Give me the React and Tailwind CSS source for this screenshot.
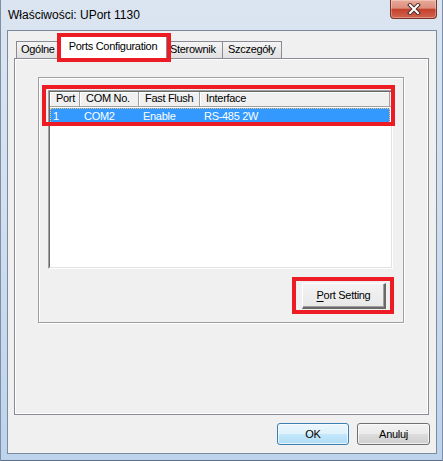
export default function App() {
  const tabText = "text-[11px] tracking-[-0.3px] leading-[13px]";
  return (
    <div className="w-[443px] h-[461px] flex flex-col relative overflow-hidden bg-[linear-gradient(to_bottom,#dbe5f1_0%,#d3e0ef_40%,#bdd3ec_100%)] shadow-[inset_1px_0_0_#7d8fa6,inset_-1px_0_0_#7d8fa6,inset_0_-1px_0_#5d6f86] font-['Liberation_Sans',Arial,sans-serif] text-black">
      {/* Title bar */}
      <div className="h-[30px] flex items-start justify-between shrink-0">
        <div className="pl-[8px] pt-[8px] text-[12px] leading-[14px] text-black">Właściwości: UPort 1130</div>
        <div className="mr-[6px] w-[47px] h-[19px] rounded-b-[4px] border border-t-0 border-[#7a3328] bg-[linear-gradient(to_bottom,#eaa898_0%,#dc8f7d_45%,#c5412d_52%,#d1644d_100%)] shadow-[inset_0_0_0_1px_rgba(255,255,255,0.3)] flex items-center justify-center">
          <svg width="14" height="12" viewBox="0 0 14 12">
            <path d="M3 2 L11 10 M11 2 L3 10" stroke="#4a2c28" strokeWidth="4" strokeLinecap="square" />
            <path d="M3 2 L11 10 M11 2 L3 10" stroke="#ffffff" strokeWidth="2" strokeLinecap="square" />
          </svg>
        </div>
      </div>

      {/* Client area */}
      <div className="flex-1 ml-[7px] mr-[6px] mb-[7px] border border-[#7a8ba0] bg-[#f0f0f0] flex flex-col">
        {/* Tabs */}
        <div className="h-[27px] shrink-0 flex items-end pl-[8px]">
          <div className={`h-[17px] w-[43px] border-l border-t border-[#898c95] bg-gradient-to-b from-[#f4f4f4] to-[#e1e1e1] pl-[4px] pt-[1px] ${tabText}`}>Ogólne</div>
          <div className={`relative z-10 -mb-px h-[23px] w-[108px] border-l border-t border-r border-[#898c95] bg-white text-center pt-[3px] ${tabText}`}>Ports Configuration</div>
          <div className={`h-[17px] w-[56px] border-t border-r border-[#898c95] bg-gradient-to-b from-[#f4f4f4] to-[#e1e1e1] pl-[3px] pt-[1px] ${tabText}`}>Sterownik</div>
          <div className={`h-[17px] w-[59px] border-t border-r border-[#898c95] bg-gradient-to-b from-[#f4f4f4] to-[#e1e1e1] pl-[5px] pt-[1px] ${tabText}`}>Szczegóły</div>
        </div>

        {/* Tab panel */}
        <div className="ml-[6px] w-[415px] h-[357px] shrink-0 border border-[#898c95] bg-[#f0f0f0] shadow-[inset_0_0_0_1px_#ffffff]">
          {/* Group box */}
          <div className="ml-[23px] mt-[18px] w-[366px] h-[246px] border border-[#a0a0a0] shadow-[1px_1px_0_#ffffff,inset_1px_1px_0_#ffffff] flex flex-col">
            {/* List view */}
            <div className="ml-[9px] mt-[12px] w-[345px] h-[179px] border-t border-l border-t-[#a0a0a0] border-l-[#a0a0a0] border-b border-r border-b-white border-r-white">
              <div className="w-full h-full border-t border-l border-t-[#696969] border-l-[#696969] border-b border-r border-b-[#e3e3e3] border-r-[#e3e3e3] bg-white flex flex-col">
                <div className="h-[15px] flex border-b border-[#a0a0a0] bg-[#f0f0f0] text-[11px] tracking-[-0.3px] leading-[13px] text-black">
                  <div className="w-[30px] border-r border-[#a0a0a0] shadow-[inset_1px_1px_0_#ffffff] pl-[6px]">Port</div>
                  <div className="w-[59px] border-r border-[#a0a0a0] shadow-[inset_1px_1px_0_#ffffff] pl-[6px]">COM No.</div>
                  <div className="w-[61px] border-r border-[#a0a0a0] shadow-[inset_1px_1px_0_#ffffff] pl-[6px]">Fast Flush</div>
                  <div className="w-[190px] border-r border-[#a0a0a0] shadow-[inset_1px_1px_0_#ffffff] pl-[6px]">Interface</div>
                </div>
                <div className="mt-px h-[16px] w-[340px] flex items-center bg-[#3399ff] outline-1 outline-dotted outline-[#f2c27e] -outline-offset-1 text-white text-[11px] tracking-[-0.3px] leading-[13px]">
                  <div className="w-[30px] pl-[3px]">1</div>
                  <div className="w-[59px] pl-[4px]">COM2</div>
                  <div className="w-[61px] pl-[4px]">Enable</div>
                  <div className="pl-[4px]">RS-485 2W</div>
                </div>
              </div>
            </div>
            {/* Port Setting button */}
            <div className="flex justify-end mt-[14px] mr-[17px]">
              <button className="w-[84px] h-[26px] border-t border-l border-t-[#ffffff] border-l-[#ffffff] border-r-2 border-b-2 border-r-[#696969] border-b-[#696969] bg-gradient-to-b from-[#f3f3f3] to-[#e8e8e8] shadow-[inset_-1px_-1px_0_#a0a0a0] text-[11px] tracking-[-0.3px] leading-[13px] text-black flex items-center justify-center">
                <span><span className="underline underline-offset-2">P</span>ort Setting</span>
              </button>
            </div>
          </div>
        </div>

        {/* Bottom buttons */}
        <div className="mt-[8px] mr-[6px] flex justify-end gap-[8px]">
          <button className="w-[72px] h-[22px] rounded-[3px] border border-[#3c7fb1] bg-[linear-gradient(to_bottom,#ecf7fd_0%,#dff2fc_48%,#c4e7fb_50%,#b0dcf6_100%)] shadow-[inset_0_0_0_1px_rgba(255,255,255,0.7)] text-[11px] tracking-[-0.3px] leading-[13px] text-black flex items-center justify-center">OK</button>
          <button className="w-[73px] h-[22px] rounded-[3px] border border-[#707070] bg-[linear-gradient(to_bottom,#f2f2f2_0%,#ebebeb_48%,#dddddd_50%,#cfcfcf_100%)] shadow-[inset_0_0_0_1px_rgba(255,255,255,0.7)] text-[11px] tracking-[-0.3px] leading-[13px] text-black flex items-center justify-center">Anuluj</button>
        </div>
      </div>

      {/* Red annotation boxes */}
      <div className="absolute left-[57px] top-[33px] w-[114px] h-[29px] border-4 border-[#ed1c24] z-20 pointer-events-none" />
      <div className="absolute left-[42px] top-[85px] w-[353px] h-[41px] border-4 border-[#ed1c24] z-20 pointer-events-none" />
      <div className="absolute left-[292px] top-[277px] w-[102px] h-[37px] border-4 border-[#ed1c24] z-20 pointer-events-none" />
    </div>
  );
}
